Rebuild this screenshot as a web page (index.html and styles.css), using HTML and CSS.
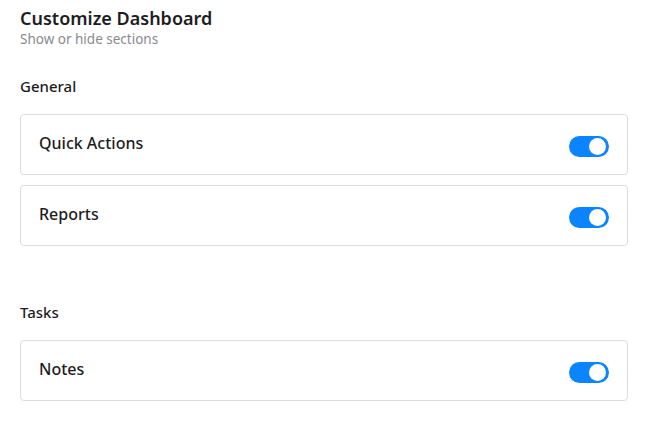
FILE: index.html
```html
<!DOCTYPE html>
<html lang="en">
<head>
    <meta charset="UTF-8">
    <meta name="viewport" content="width=device-width, initial-scale=1.0">
    <title>Customize Dashboard</title>
    <link rel="stylesheet" href="styles.css">
</head>
<body>
    <div class="panel">
        <div class="header">
            <h1>Customize Dashboard</h1>
            <p class="subtitle">Show or hide sections</p>
        </div>

        <div class="section">
            <h2>General</h2>
            <div class="card">
                <span class="card-label">Quick Actions</span>
                <label class="switch">
                    <input type="checkbox" checked>
                    <span class="slider"></span>
                </label>
            </div>
            <div class="card">
                <span class="card-label">Reports</span>
                <label class="switch">
                    <input type="checkbox" checked>
                    <span class="slider"></span>
                </label>
            </div>
        </div>

        <div class="section">
            <h2>Tasks</h2>
            <div class="card">
                <span class="card-label">Notes</span>
                <label class="switch">
                    <input type="checkbox" checked>
                    <span class="slider"></span>
                </label>
            </div>
        </div>
    </div>
</body>
</html>
```

FILE: styles.css
```css
body {
    margin: 0;
    background-color: #fff;
    font-family: "Noto Sans", sans-serif;
    color: #1d1d1f;
}

.panel {
    padding: 6px 21px 20px 20px;
}

.header h1 {
    margin: 0;
    font-size: 18px;
    font-weight: 600;
}

.subtitle {
    margin: 0;
    font-size: 13.5px;
    color: #8a8a8e;
}

.section {
    margin-top: 28px;
}

.section + .section {
    margin-top: 56px;
}

.section h2 {
    margin: 0 0 18px;
    font-size: 15px;
    font-weight: 500;
}

.card {
    display: flex;
    justify-content: space-between;
    align-items: center;
    height: 59px;
    padding: 0 18px;
    margin-bottom: 10px;
    border: 1px solid #dcdcde;
    border-radius: 4px;
}

.card-label {
    font-size: 16px;
    font-weight: 500;
    margin-top: -4px;
}

.switch {
    position: relative;
    width: 40px;
    height: 21px;
    margin-top: 4px;
}

.switch input {
    display: none;
}

.slider {
    position: absolute;
    inset: 0;
    background-color: #0a84ff;
    border-radius: 11px;
    cursor: pointer;
}

.slider::before {
    content: '';
    position: absolute;
    top: 2px;
    right: 3px;
    width: 17px;
    height: 17px;
    background-color: #fff;
    border-radius: 50%;
}
```
